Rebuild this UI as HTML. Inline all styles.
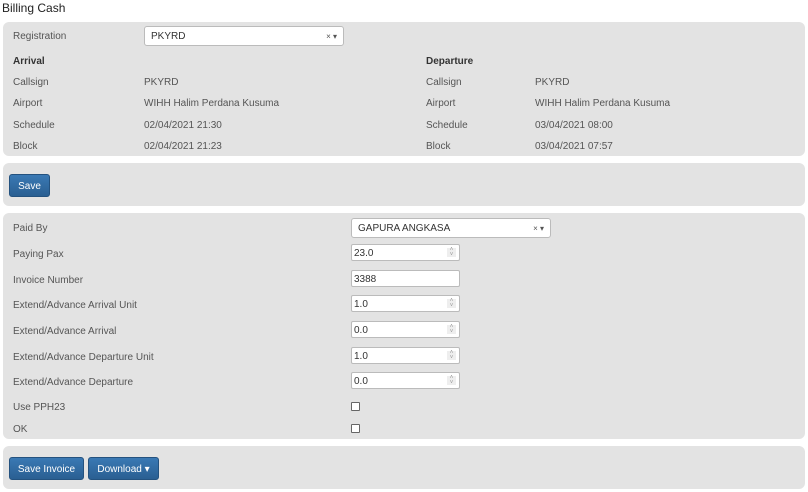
<!DOCTYPE html><html><head><style>
body{margin:0;width:808px;height:492px;background:#fff;font-family:"Liberation Sans",sans-serif;font-size:10px;color:#555;position:relative;overflow:hidden}
.a{position:absolute;white-space:nowrap}
.p{position:absolute;left:3px;width:802px;background:#e3e3e3;border-radius:6px}
.l{position:absolute;line-height:12px;margin-top:2px}
.in{position:absolute;background:#fff;border:1px solid #bbb;border-radius:2px;height:17px;box-sizing:border-box;width:109px;left:351px;line-height:17px;padding-left:2px;color:#333}
.sp{position:absolute;right:3px;top:3px;width:9px;height:9px;background:#eee;font-size:6px;line-height:5px;text-align:center;color:#999}
.sel{position:absolute;background:#fff;border:1px solid #bbb;border-radius:3px;height:20px;box-sizing:border-box;line-height:20px;padding-left:6px;color:#333}
.x{position:absolute;right:6px;top:0;font-size:8px;color:#555}
.btn{position:absolute;background:linear-gradient(#3a79b4,#2a5f92);border:1px solid #24527f;border-radius:3px;color:#fff;height:23px;box-sizing:border-box;line-height:23px;text-align:center;font-size:10px}
.cb{position:absolute;left:351px;width:9px;height:9px;border:1px solid #666;border-radius:1px;background:#fff;box-sizing:border-box}
b{color:#333}
</style></head><body>
<div class="a" style="left:2px;top:1px;font-size:12px;color:#222">Billing Cash</div>
<div class="p" style="top:22px;height:134px"></div>
<div class="p" style="top:163px;height:43px"></div>
<div class="p" style="top:213px;height:226px"></div>
<div class="p" style="top:446px;height:43px"></div>

<div class="l" style="left:13px;top:29px">Registration</div>
<div class="sel" style="left:144px;top:26px;width:200px">PKYRD<span class="x">× ▾</span></div>
<div class="l" style="left:13px;top:54px"><b>Arrival</b></div>
<div class="l" style="left:426px;top:54px"><b>Departure</b></div>
<div class="l" style="left:13px;top:75px">Callsign</div><div class="l" style="left:144px;top:75px">PKYRD</div>
<div class="l" style="left:13px;top:96px">Airport</div><div class="l" style="left:144px;top:96px">WIHH Halim Perdana Kusuma</div>
<div class="l" style="left:13px;top:118px">Schedule</div><div class="l" style="left:144px;top:118px">02/04/2021 21:30</div>
<div class="l" style="left:13px;top:139px">Block</div><div class="l" style="left:144px;top:139px">02/04/2021 21:23</div>
<div class="l" style="left:426px;top:75px">Callsign</div><div class="l" style="left:535px;top:75px">PKYRD</div>
<div class="l" style="left:426px;top:96px">Airport</div><div class="l" style="left:535px;top:96px">WIHH Halim Perdana Kusuma</div>
<div class="l" style="left:426px;top:118px">Schedule</div><div class="l" style="left:535px;top:118px">03/04/2021 08:00</div>
<div class="l" style="left:426px;top:139px">Block</div><div class="l" style="left:535px;top:139px">03/04/2021 07:57</div>

<div class="btn" style="left:9px;top:174px;width:41px">Save</div>

<div class="l" style="left:13px;top:221px">Paid By</div>
<div class="sel" style="left:351px;top:218px;width:200px">GAPURA ANGKASA<span class="x">× ▾</span></div>
<div class="l" style="left:13px;top:247px">Paying Pax</div><div class="in" style="top:244px">23.0<span class="sp">˄<br>˅</span></div>
<div class="l" style="left:13px;top:273px">Invoice Number</div><div class="in" style="top:270px">3388</div>
<div class="l" style="left:13px;top:298px">Extend/Advance Arrival Unit</div><div class="in" style="top:295px">1.0<span class="sp">˄<br>˅</span></div>
<div class="l" style="left:13px;top:324px">Extend/Advance Arrival</div><div class="in" style="top:321px">0.0<span class="sp">˄<br>˅</span></div>
<div class="l" style="left:13px;top:350px">Extend/Advance Departure Unit</div><div class="in" style="top:347px">1.0<span class="sp">˄<br>˅</span></div>
<div class="l" style="left:13px;top:375px">Extend/Advance Departure</div><div class="in" style="top:372px">0.0<span class="sp">˄<br>˅</span></div>
<div class="l" style="left:13px;top:400px">Use PPH23</div><div class="cb" style="top:402px"></div>
<div class="l" style="left:13px;top:422px">OK</div><div class="cb" style="top:424px"></div>

<div class="btn" style="left:9px;top:457px;width:75px">Save Invoice</div>
<div class="btn" style="left:88px;top:457px;width:71px">Download ▾</div>
</body></html>
